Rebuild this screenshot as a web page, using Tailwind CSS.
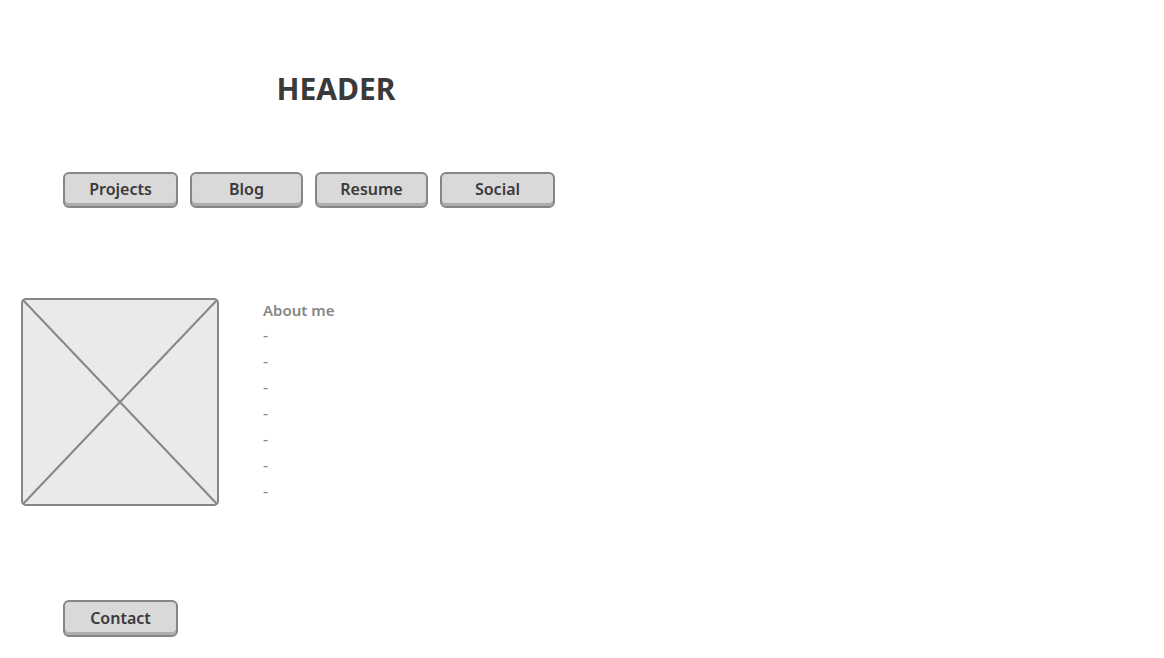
<!DOCTYPE html>
<html lang="en">
<head>
<meta charset="utf-8">
<meta name="viewport" content="width=device-width, initial-scale=1">
<title>Portfolio</title>
<script src="https://cdn.jsdelivr.net/npm/@tailwindcss/browser@4"></script>
</head>
<body class="bg-white font-['Noto_Sans',sans-serif] text-[#3a3a3a]">
<div class="max-w-2xl">
  <header class="pt-[69px]">
    <h1 class="text-center text-[30px] leading-10 font-bold">HEADER</h1>
    <nav class="mt-[63px] ml-[63px] flex gap-3" aria-label="Main">
      <button type="button" class="h-9 w-[115px] rounded-md border-2 border-[#868686] bg-[#d9d9d9] pb-[3px] text-base leading-6 font-semibold shadow-[inset_0_-3px_0_#adadad]">Projects</button>
      <button type="button" class="h-9 w-[113px] rounded-md border-2 border-[#868686] bg-[#d9d9d9] pb-[3px] text-base leading-6 font-semibold shadow-[inset_0_-3px_0_#adadad]">Blog</button>
      <button type="button" class="h-9 w-[113px] rounded-md border-2 border-[#868686] bg-[#d9d9d9] pb-[3px] text-base leading-6 font-semibold shadow-[inset_0_-3px_0_#adadad]">Resume</button>
      <button type="button" class="h-9 w-[115px] rounded-md border-2 border-[#868686] bg-[#d9d9d9] pb-[3px] text-base leading-6 font-semibold shadow-[inset_0_-3px_0_#adadad]">Social</button>
    </nav>
  </header>
  <main class="mt-[90px] ml-[21px] flex items-start gap-11">
    <svg class="h-52 w-[198px] shrink-0" viewBox="0 0 198 208" fill="none" stroke="#868686" stroke-width="2" role="img" aria-label="Portrait placeholder">
      <rect x="1" y="1" width="196" height="206" rx="4" fill="#eaeaea"/>
      <path d="M2 2 196 206M196 2 2 206"/>
    </svg>
    <section class="text-base leading-[26px] text-[#868686]">
      <h2 class="text-[15px] leading-6 font-semibold">About me</h2>
      <p>-</p>
      <p>-</p>
      <p>-</p>
      <p>-</p>
      <p>-</p>
      <p>-</p>
      <p>-</p>
    </section>
  </main>
  <footer class="mt-[94px] ml-[63px]">
    <button type="button" class="block h-[37px] w-[115px] rounded-md border-2 border-[#868686] bg-[#d9d9d9] pb-px text-base leading-6 font-semibold shadow-[inset_0_-3px_0_#adadad]">Contact</button>
  </footer>
</div>
</body>
</html>
